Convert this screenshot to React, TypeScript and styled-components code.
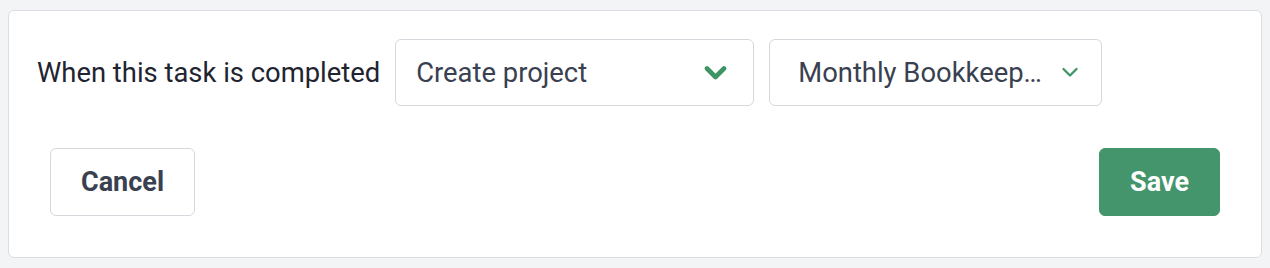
import React from "react";
import styled, { createGlobalStyle } from "styled-components";

const Global = createGlobalStyle`
  html, body { margin: 0; padding: 0; background: #f3f4f6; }
  body { font-family: Roboto, "Liberation Sans", Arial, sans-serif; }
  * { box-sizing: border-box; }
`;

const Page = styled.div`
  padding: 10px 8px 9px 8px;
`;

const Card = styled.div`
  background: #ffffff;
  border: 1px solid #dcdee2;
  border-radius: 6px;
  padding: 28px 28px 28px 28px;
`;

const Row = styled.div`
  display: flex;
  align-items: center;
  gap: 15px;
`;

const Label = styled.span`
  font-size: 27.4px;
  color: #1f2431;
  white-space: nowrap;
`;

const Select = styled.div<{ $width: number; $padLeft: number; $padRight: number }>`
  width: ${(p) => p.$width}px;
  height: 67px;
  display: flex;
  align-items: center;
  justify-content: space-between;
  gap: 20px;
  padding: 0 ${(p) => p.$padRight}px 0 ${(p) => p.$padLeft}px;
  border: 1px solid #d5d8dd;
  border-radius: 6px;
  background: #fff;
`;

const SelectText = styled.span`
  font-size: 27.4px;
  color: #394150;
  white-space: nowrap;
`;

const Footer = styled.div`
  display: flex;
  justify-content: space-between;
  align-items: center;
  margin-top: 42px;
  padding: 0 13px 13px 13px;
`;

const Button = styled.button<{ $primary?: boolean }>`
  height: 68px;
  padding: 0 30px;
  border-radius: 6px;
  font-family: Roboto, "Liberation Sans", Arial, sans-serif;
  font-weight: 700;
  font-size: 27px;
  cursor: pointer;
  border: 1px solid ${(p) => (p.$primary ? "#44956b" : "#d5d8dd")};
  background: ${(p) => (p.$primary ? "#44956b" : "#ffffff")};
  color: ${(p) => (p.$primary ? "#ffffff" : "#394150")};
`;

const BoldChevron = () => (
  <svg width="23" height="16" viewBox="0 0 23 16" style={{ flexShrink: 0 }}>
    <path
      d="M3 3.5 L11.5 12 L20 3.5"
      fill="none"
      stroke="#3f9466"
      strokeWidth="4.6"
      strokeLinecap="round"
      strokeLinejoin="round"
    />
  </svg>
);

const ThinChevron = () => (
  <svg width="16" height="11" viewBox="0 0 16 11" style={{ flexShrink: 0 }}>
    <path
      d="M1.5 2 L8 8.5 L14.5 2"
      fill="none"
      stroke="#3f9466"
      strokeWidth="2.3"
      strokeLinecap="round"
      strokeLinejoin="round"
    />
  </svg>
);

export default function App() {
  return (
    <>
      <Global />
      <Page>
        <Card>
          <Row>
            <Label>When this task is completed</Label>
            <Select $width={359} $padLeft={20} $padRight={26}>
              <SelectText>Create project</SelectText>
              <BoldChevron />
            </Select>
            <Select $width={333} $padLeft={28} $padRight={23}>
              <SelectText>Monthly Bookkeep…</SelectText>
              <ThinChevron />
            </Select>
          </Row>
          <Footer>
            <Button>Cancel</Button>
            <Button $primary>Save</Button>
          </Footer>
        </Card>
      </Page>
    </>
  );
}
